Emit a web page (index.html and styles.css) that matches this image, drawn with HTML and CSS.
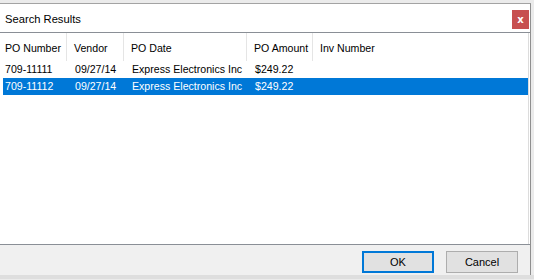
FILE: index.html
```html
<!DOCTYPE html>
<html lang="en">
<head>
    <meta charset="UTF-8">
    <meta name="viewport" content="width=device-width, initial-scale=1.0">
    <title>Search Results</title>
    <link rel="stylesheet" href="styles.css">
</head>
<body>
    <div class="dialog">
        <div class="titlebar">
            <span class="title">Search Results</span>
            <button class="close" type="button">x</button>
        </div>
        <div class="list">
            <div class="row header">
                <div class="cell">PO Number</div>
                <div class="cell">Vendor</div>
                <div class="cell">PO Date</div>
                <div class="cell">PO Amount</div>
                <div class="cell">Inv Number</div>
            </div>
            <div class="row item">
                <div class="cell">709-11111</div>
                <div class="cell">09/27/14</div>
                <div class="cell">Express Electronics Inc</div>
                <div class="cell">$249.22</div>
                <div class="cell"></div>
            </div>
            <div class="row item selected">
                <div class="cell">709-11112</div>
                <div class="cell">09/27/14</div>
                <div class="cell">Express Electronics Inc</div>
                <div class="cell">$249.22</div>
                <div class="cell"></div>
            </div>
        </div>
        <div class="footer">
            <button class="btn default" type="button">OK</button>
            <button class="btn" type="button">Cancel</button>
        </div>
    </div>
    <div class="under"></div>
</body>
</html>
```

FILE: styles.css
```css
body {
    margin: 0;
    width: 534px;
    height: 280px;
    overflow: hidden;
    background-color: #ebebeb;
    font-family: 'Liberation Sans', Arial, sans-serif;
    font-size: 10.6px;
    color: #000;
}
.dialog {
    margin-top: 3px;
    width: 530px;
    border-top: 1px solid #a3a3a3;
    border-right: 1px solid #8f8f8f;
    background-color: #fff;
}
.titlebar {
    height: 28px;
    display: flex;
    align-items: center;
    justify-content: space-between;
    padding-left: 5px;
    padding-right: 1px;
    border-bottom: 1px solid #8a8f96;
}
.title {
    font-size: 11.2px;
    padding-top: 2px;
}
.close {
    width: 17px;
    height: 19px;
    margin-top: 3px;
    padding: 0;
    border: none;
    background-color: #c75050;
    color: #fff;
    font-family: 'DejaVu Sans', sans-serif;
    font-weight: bold;
    font-size: 10px;
    line-height: 17px;
}
.list {
    height: 211px;
    border-right: 1px solid #dcdcdc;
    margin-right: 1px;
}
.row {
    display: grid;
    grid-template-columns: 67px 57px 123px 66px 1fr;
    white-space: nowrap;
}
.header {
    height: 28px;
}
.header .cell {
    display: flex;
    align-items: center;
    padding-top: 2px;
    padding-left: 7px;
    border-right: 1px solid #e5e5e5;
}
.header .cell:first-child {
    padding-left: 5px;
}
.header .cell:last-child {
    border-right: none;
}
.item {
    height: 17px;
    line-height: 17px;
    margin-left: 3px;
    grid-template-columns: 64px 57px 123px 66px 1fr;
}
.item .cell {
    padding-left: 8px;
}
.item .cell:first-child {
    padding-left: 2px;
}
.selected {
    background-color: #0078d7;
    color: #fff;
}
.footer {
    height: 31px;
    box-sizing: border-box;
    border-top: 1px solid #8a8f96;
    background-color: #f0f0f0;
    display: flex;
    justify-content: flex-end;
    gap: 12px;
    padding: 6px 12px 0 0;
}
.btn {
    width: 72px;
    height: 22px;
    padding: 0;
    border: 1px solid #adadad;
    background-color: #e1e1e1;
    font-family: 'Liberation Sans', Arial, sans-serif;
    font-size: 11px;
    color: #000;
}
.btn.default {
    border: 2px solid #0078d7;
}
.under {
    height: 4px;
    background-color: #dedede;
}
```
